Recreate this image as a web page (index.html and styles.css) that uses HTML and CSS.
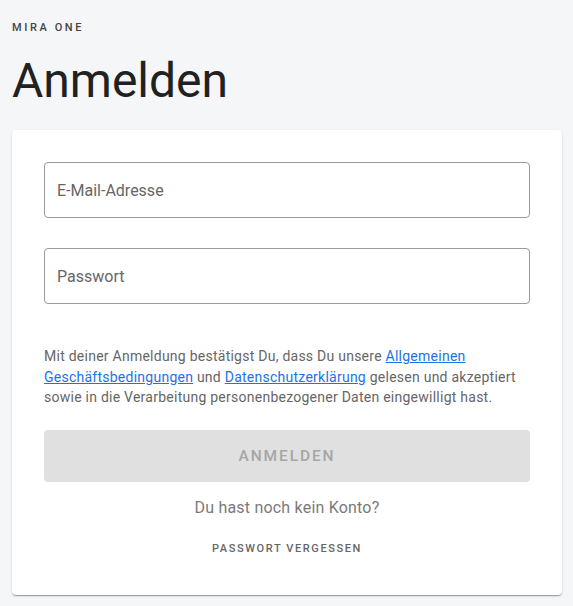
FILE: index.html
```html
<!DOCTYPE html>
<html lang="de">
<head>
<meta charset="utf-8">
<title>Anmelden</title>
<link rel="stylesheet" href="styles.css">
</head>
<body>
<div class="page">
  <div class="brand">MIRA ONE</div>
  <h1 class="title">Anmelden</h1>
  <div class="card">
    <div class="field"><span class="label">E-Mail-Adresse</span></div>
    <div class="field"><span class="label">Passwort</span></div>
    <p class="terms">Mit deiner Anmeldung bestätigst Du, dass Du unsere <a href="#">Allgemeinen Geschäftsbedingungen</a> und <a href="#">Datenschutzerklärung</a> gelesen und akzeptiert sowie in die Verarbeitung personenbezogener Daten eingewilligt hast.</p>
    <button class="submit" disabled>ANMELDEN</button>
    <div class="signup">Du hast noch kein Konto?</div>
    <div class="forgot">PASSWORT VERGESSEN</div>
  </div>
</div>
</body>
</html>
```

FILE: styles.css
```css
* { box-sizing: border-box; }
html, body { margin: 0; padding: 0; }
body {
  background: #f5f6f8;
  font-family: Roboto, "Liberation Sans", sans-serif;
}
.page {
  padding: 20px 11px 12px 12px;
}
.brand {
  font-size: 11px;
  font-weight: 500;
  letter-spacing: 2.6px;
  color: #444;
  line-height: 16px;
}
.title {
  margin: 17px 0 0;
  font-size: 48px;
  font-weight: 400;
  color: #212121;
  line-height: 56px;
}
.card {
  margin-top: 21px;
  background: #fff;
  border-radius: 4px;
  box-shadow: 0 2px 1px -1px rgba(0,0,0,0.2), 0 1px 1px rgba(0,0,0,0.14), 0 1px 3px rgba(0,0,0,0.12);
  padding: 32px 32px 36px;
  display: flex;
  flex-direction: column;
}
.field {
  height: 56px;
  border: 1px solid #9a9a9a;
  border-radius: 4px;
  display: flex;
  align-items: center;
  padding: 0 12px;
  margin-bottom: 30px;
}
.label {
  font-size: 16px;
  color: #666;
}
.terms {
  margin: 12px 0 0;
  font-size: 14px;
  line-height: 20.5px;
  color: #666;
  letter-spacing: 0.25px;
}
.terms a {
  color: #1a73e8;
  text-decoration: underline;
}
.submit {
  margin-top: 22px;
  height: 52px;
  border: 0;
  border-radius: 4px;
  background: #e0e0e0;
  color: #a6a6a6;
  font-family: inherit;
  font-size: 15.5px;
  font-weight: 500;
  letter-spacing: 1.9px;
}
.signup {
  margin-top: 16px;
  text-align: center;
  font-size: 16px;
  line-height: 20px;
  letter-spacing: 0.2px;
  color: #7a7a7a;
}
.forgot {
  margin-top: 21px;
  text-align: center;
  font-size: 11px;
  font-weight: 500;
  letter-spacing: 1.6px;
  line-height: 20px;
  color: #666;
}
```
